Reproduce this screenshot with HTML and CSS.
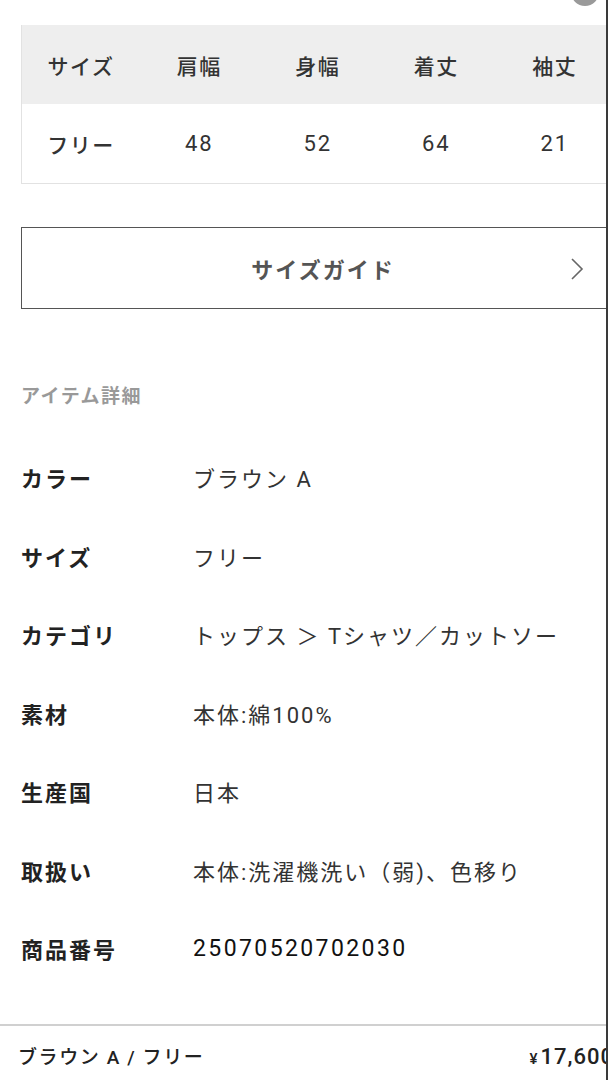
FILE: index.html
```html
<!DOCTYPE html>
<html lang="ja">
<head>
  <meta charset="UTF-8" />
  <title>アイテム詳細</title>
  <meta name="viewport" content="width=device-width, initial-scale=1.0" />
  <link rel="stylesheet" href="styles.css">
</head>
<body>
  <div class="page">
    <span class="top-circle"></span>

    <div class="content">
      <table class="size-table">
        <thead>
          <tr>
            <th>サイズ</th>
            <th>肩幅</th>
            <th>身幅</th>
            <th>着丈</th>
            <th>袖丈</th>
          </tr>
        </thead>
        <tbody>
          <tr>
            <td>フリー</td>
            <td class="num">48</td>
            <td class="num">52</td>
            <td class="num">64</td>
            <td class="num">21</td>
          </tr>
        </tbody>
      </table>

      <button type="button" class="guide-button">
        <span>サイズガイド</span>
        <svg class="chevron" width="14" height="24" viewBox="0 0 14 24">
          <path d="M2 2 L12 12 L2 22" fill="none" stroke="#666" stroke-width="1.6" />
        </svg>
      </button>

      <h2 class="section-title">アイテム詳細</h2>

      <dl class="detail-list">
        <div class="detail-row"><dt>カラー</dt><dd>ブラウン A</dd></div>
        <div class="detail-row"><dt>サイズ</dt><dd>フリー</dd></div>
        <div class="detail-row"><dt>カテゴリ</dt><dd>トップス ＞ Tシャツ／カットソー</dd></div>
        <div class="detail-row"><dt>素材</dt><dd>本体:綿100%</dd></div>
        <div class="detail-row"><dt>生産国</dt><dd>日本</dd></div>
        <div class="detail-row"><dt>取扱い</dt><dd>本体:洗濯機洗い（弱)、色移り</dd></div>
        <div class="detail-row"><dt>商品番号</dt><dd class="number">25070520702030</dd></div>
      </dl>
    </div>

    <div class="cart-bar">
      <span class="cart-variant">ブラウン A / フリー</span>
      <span class="cart-price"><small>¥</small>17,600</span>
    </div>
  </div>
</body>
</html>
```

FILE: styles.css
```css
:root {
  --font: Roboto, "Noto Sans CJK JP", "Noto Sans", sans-serif;
  --text: #222;
  --line: #e2e2e2;
}

body {
  margin: 0;
  font-family: var(--font);
  background-color: white;
  color: var(--text);
}

.page {
  position: relative;
  width: 606px;
  height: 1080px;
  overflow: hidden;
  border-right: 2px solid #3a3a3a;
}

.top-circle {
  position: absolute;
  top: -22px;
  left: 571px;
  width: 28px;
  height: 28px;
  border-radius: 50%;
  background-color: #9a9a9a;
}

.content {
  padding: 25px 0 0 21px;
  width: 610px;
}

.size-table {
  width: 593px;
  border-collapse: collapse;
  table-layout: fixed;
  border-left: 1px solid var(--line);
  border-bottom: 1px solid var(--line);
}

.size-table th,
.size-table td {
  height: 79px;
  padding: 0;
  text-align: center;
  font-size: 21px;
  font-weight: 500;
  letter-spacing: 1.5px;
  color: #333;
}

.size-table th {
  background-color: #eeeeee;
}

.size-table td.num {
  font-size: 22px;
  font-weight: 400;
  letter-spacing: 2px;
}

.guide-button {
  position: relative;
  display: flex;
  align-items: center;
  justify-content: center;
  width: 602px;
  height: 82px;
  margin-top: 43px;
  padding: 0 0 0 2px;
  background-color: white;
  border: 1.5px solid #555;
  font-family: var(--font);
  font-size: 22px;
  font-weight: bold;
  letter-spacing: 2px;
  color: #555;
}

.chevron {
  position: absolute;
  right: 38px;
  top: 29px;
}

.section-title {
  margin: 73px 0 0;
  font-size: 19px;
  line-height: 30px;
  font-weight: bold;
  letter-spacing: 1.5px;
  color: #999;
}

.detail-list {
  margin: 26px 0 0;
}

.detail-row {
  display: flex;
  align-items: center;
  height: 78.5px;
}

.detail-row dt {
  width: 172px;
  font-size: 22px;
  font-weight: bold;
  letter-spacing: 2px;
  color: #222;
}

.detail-row dd {
  margin: 0;
  font-size: 22px;
  letter-spacing: 2px;
  color: #333;
  white-space: nowrap;
}

.detail-row dd.number {
  color: #111;
  font-size: 23px;
  font-weight: 400;
  letter-spacing: 2.4px;
}

.cart-bar {
  display: flex;
  justify-content: space-between;
  align-items: center;
  width: 614px;
  margin-top: 36px;
  padding: 19px 0 0 18px;
  box-sizing: border-box;
  border-top: 2px solid #d0d0d0;
  line-height: 24px;
}

.cart-variant {
  font-size: 19px;
  font-weight: 500;
  letter-spacing: 1.6px;
  color: #222;
}

.cart-price {
  font-size: 22px;
  font-weight: 500;
  letter-spacing: 1px;
  color: #222;
}

.cart-price small {
  font-size: 15px;
  margin-right: 2px;
}
```
